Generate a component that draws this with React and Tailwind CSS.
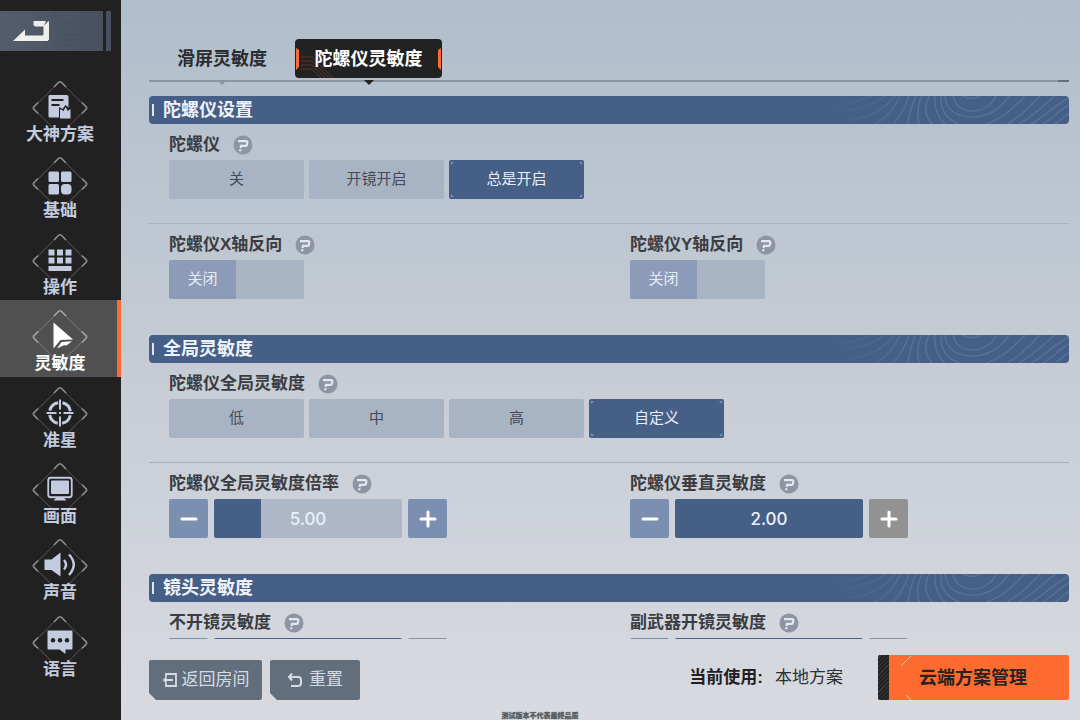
import { useState } from "react";

function SchemeIcon() {
  return (
    <>
      <path
        fillRule="evenodd"
        d="M3 1.500 H20 Q22 1.500 22 3.500 V14 L19 11.500 L16 15.500 L12.500 13.500 V24 H3 Q2 24 2 22.500 V3 Q2 1.500 3 1.500 Z M5 5.500 V7.500 H17 V5.500 Z M5 10.500 V12.500 H13 V10.500 Z"
      />
      <path d="M13.500 25 V15.500 L17 17.500 L19.200 13.500 L21.200 17.500 L24 15.500 V25 Z" />
    </>
  );
}

function BasicIcon() {
  return (
    <>
      <rect x="2" y="2" width="10.500" height="10.500" rx="1.500" />
      <rect x="14.500" y="2" width="10.500" height="10.500" rx="1.500" />
      <rect x="2" y="14.500" width="10.500" height="10.500" rx="1.500" />
      <rect x="14.500" y="14.500" width="10.500" height="10.500" rx="4" />
    </>
  );
}

function ControlIcon() {
  return (
    <>
      {[2, 10.5, 19].map((x) => (
        <g key={x}>
          <rect x={x} y="3" width="6" height="6" />
          <rect x={x} y="11" width="6" height="6" />
        </g>
      ))}
      <rect x="2" y="19.500" width="23" height="5" />
    </>
  );
}

function CursorIcon() {
  return (
    <>
      <path d="M7 0 L26.500 17 L14 17.500 L7 26 Z" />
      <path d="M10.500 26 L15 19.500 L25.500 18.800 L20 23 L17.500 22.800 Z" />
    </>
  );
}

function AimIcon() {
  return (
    <>
      <circle
        cx="13.500"
        cy="13.500"
        r="10.500"
        fill="none"
        stroke="currentColor"
        strokeWidth="3"
        strokeDasharray="12 4.490"
        strokeDashoffset="-2.250"
      />
      <path d="M12.500 0 H14.500 V10 H12.500 Z M12.500 17 H14.500 V27 H12.500 Z M0 12.500 H10 V14.500 H0 Z M17 12.500 H27 V14.500 H17 Z M12.500 12.500 H14.500 V14.500 H12.500 Z" />
    </>
  );
}

function DisplayIcon() {
  return (
    <>
      <rect x="1.750" y="2.250" width="23.500" height="19.500" rx="2.500" fill="none" stroke="currentColor" strokeWidth="1.800" />
      <rect x="4.500" y="5" width="18" height="13.500" rx="1" />
      <path d="M10.500 21.500 H16.500 L20 25 H7 Z" />
    </>
  );
}

function SoundIcon() {
  return (
    <>
      <path d="M-2 8 H5 L14 1 V25 L5 18.500 H-2 Z" />
      <path
        d="M17.500 8.500 Q21.500 13 17.500 18 M22.500 3 Q32 13 22.500 23.500"
        fill="none"
        stroke="currentColor"
        strokeWidth="2.400"
      />
    </>
  );
}

function LanguageIcon() {
  return (
    <path
      fillRule="evenodd"
      d="M2 2 H25 Q26 2 26 3 V20 Q26 21 25 21 H19 V25.500 L13 21 H2 Q1 21 1 20 V3 Q1 2 2 2 Z M6.500 9.500 a2.300 2.300 0 1 0 0.010 0 Z M13.500 9.500 a2.300 2.300 0 1 0 0.010 0 Z M20.500 9.500 a2.300 2.300 0 1 0 0.010 0 Z"
    />
  );
}

const NAV = [
  { id: "scheme", label: "大神方案", Icon: SchemeIcon },
  { id: "basic", label: "基础", Icon: BasicIcon },
  { id: "control", label: "操作", Icon: ControlIcon },
  { id: "sensitivity", label: "灵敏度", Icon: CursorIcon },
  { id: "aim", label: "准星", Icon: AimIcon },
  { id: "display", label: "画面", Icon: DisplayIcon },
  { id: "sound", label: "声音", Icon: SoundIcon },
  { id: "language", label: "语言", Icon: LanguageIcon },
];

function NavItem({ item, active, onSelect }) {
  const { Icon, label } = item;
  return (
    <button
      type="button"
      onClick={onSelect}
      aria-current={active ? "page" : undefined}
      className={
        "grid min-h-0 flex-1 grid-cols-1 justify-items-center border-r-4 pt-2 pl-[3px] " +
        (active ? "border-[#fc6b33] bg-[#505050] text-white" : "border-transparent text-[#c3cbdf]")
      }
    >
      <svg viewBox="0 0 58 58" className="col-start-1 row-start-1 size-[58px]" aria-hidden="true">
        <rect x="10" y="10" width="38" height="38" rx="3" transform="rotate(45 29 29)" fill="none" stroke="#fff" strokeOpacity="0.2" />
        <path
          d="M23 8 L27.500 3.200 Q29 2 30.500 3.200 L35 8 M7 23.500 L2.500 28 Q1.700 29 2.500 30 L7 34.500 M51 23.500 L55.500 28 Q56.300 29 55.500 30 L51 34.500"
          fill="none"
          stroke="#fff"
          strokeOpacity="0.45"
          strokeWidth="1.400"
        />
        <g transform="translate(15.500 14.500)" fill="currentColor">
          <Icon />
        </g>
      </svg>
      <span className="z-10 col-start-1 row-start-1 mt-[46px] text-[17px] leading-5 font-bold">{label}</span>
    </button>
  );
}

function HelpIcon({ topic }) {
  return (
    <button type="button" aria-label={topic + "说明"} className="size-5">
      <svg viewBox="0 0 20 20" className="size-5" aria-hidden="true">
        <circle cx="10" cy="10" r="9.500" fill="#8e95a2" />
        <path d="M5 6.200 H13 Q14.500 6.200 14.300 7.500 L14 9.500 Q13.800 10.800 12.500 10.800 H8 L7.600 13" fill="none" stroke="#e3e7f0" strokeWidth="2.200" />
        <path d="M6.300 14.300 H8.600 L8.300 16.300 H6 Z" fill="#e3e7f0" />
      </svg>
    </button>
  );
}

function Contours() {
  return (
    <svg viewBox="0 0 240 28" className="h-7 w-60" aria-hidden="true">
      <defs>
        <linearGradient id="contour-fade" gradientUnits="userSpaceOnUse" x1="0" y1="0" x2="240" y2="0">
          <stop offset="0" stopColor="#7f9ac0" stopOpacity="0" />
          <stop offset="0.350" stopColor="#7f9ac0" stopOpacity="0.280" />
          <stop offset="1" stopColor="#7f9ac0" stopOpacity="0.280" />
        </linearGradient>
      </defs>
      <path
        fill="none"
        stroke="url(#contour-fade)"
        strokeWidth="1.500"
        d="M134 0 Q143 5 151 0 M124 0 C126 10 134 15 143 15 C155 15 164 8 167 0 M116 0 C117 14 128 21 143 21 C160 21 172 12 180 0 M112 0 C111 14 118 23 130 28 M158 28 C175 22 186 10 196 0 M106 0 C105 12 108 21 116 28 M100 0 C95 10 96 20 103 28 M93 0 C88 10 88 20 90 28 M87 0 C82 10 80 20 79 28 M80 0 C76 12 70 22 64 28 M71 0 C66 12 58 22 46 28 M66 0 C54 14 42 21 20 24 M56 0 C44 9 30 14 8 16 M42 0 C32 5 20 8 4 9 M178 28 C190 22 200 12 211 0 M190 28 C204 20 214 10 226 0 M202 28 C214 22 222 12 240 2 M214 28 C222 24 230 14 240 9 M226 28 L240 17"
      />
    </svg>
  );
}

function SectionHeader({ children }) {
  return (
    <div className="flex h-7 items-center overflow-hidden rounded-sm bg-[#465f87] pl-[3px] text-[#eef2fa]">
      <span className="h-3 w-0.5 bg-[#dfe6f2]" />
      <h2 className="ml-[9px] flex-1 text-lg leading-7 font-bold">{children}</h2>
      <Contours />
    </div>
  );
}

function Field({ label, children }) {
  return (
    <div className="px-5 pt-2.5">
      <div className="mb-1 flex h-[22px] items-center gap-[13px]">
        <span className="text-[17px] leading-[22px] font-bold text-[#3b3d42]">{label}</span>
        <HelpIcon topic={label} />
      </div>
      {children}
    </div>
  );
}

function Corners() {
  return (
    <svg viewBox="0 0 135 39" className="pointer-events-none absolute inset-0 size-full" fill="#7f94b6" aria-hidden="true">
      <path d="M2 2 h3 l-3 3 z M133 2 h-3 l3 3 z M2 37 h3 l-3 -3 z M133 37 h-3 l3 -3 z" />
    </svg>
  );
}

function Segmented({ label, name, options, value, onChange }) {
  return (
    <div role="radiogroup" aria-label={label} className="flex gap-[5px]">
      {options.map((option) => {
        const on = option === value;
        return (
          <label
            key={option}
            className={
              "relative flex h-[39px] w-[135px] cursor-pointer items-center justify-center rounded-xs text-[15px] " +
              (on ? "bg-[#465f87] text-[#e8eefa]" : "bg-[#a8b4c3] text-[#434b58]")
            }
          >
            <input type="radio" name={name} checked={on} onChange={() => onChange(option)} className="sr-only" />
            {option}
            {on && <Corners />}
          </label>
        );
      })}
    </div>
  );
}

function Toggle({ label }) {
  const [on, setOn] = useState(false);
  return (
    <label
      className={
        "relative flex h-[39px] w-[135px] cursor-pointer overflow-hidden rounded-xs bg-[#a8b4c3] " +
        (on ? "justify-end" : "justify-start")
      }
    >
      <input
        type="checkbox"
        role="switch"
        aria-label={label}
        checked={on}
        onChange={(e) => setOn(e.target.checked)}
        className="sr-only"
      />
      <span className="flex w-[67px] items-center justify-center bg-[#8c9cb8] text-[15px] text-[#e4eaf5]">
        {on ? "开启" : "关闭"}
      </span>
    </label>
  );
}

function StepButton({ kind, disabled, onClick }) {
  return (
    <button
      type="button"
      aria-label={kind === "plus" ? "增加" : "减少"}
      disabled={disabled}
      onClick={onClick}
      className={"grid size-[39px] place-items-center rounded-xs " + (disabled ? "bg-[#929292]" : "bg-[#7b8fb0]")}
    >
      <svg viewBox="0 0 18 18" className="size-[18px]" fill="none" stroke="#fff" strokeWidth="3" strokeLinecap="round" aria-hidden="true">
        <path d={kind === "plus" ? "M2 9 H16 M9 2 V16" : "M2 9 H16"} />
      </svg>
    </button>
  );
}

function Stepper({ label, max, initial }) {
  const [value, setValue] = useState(initial);
  const percent = (value / max) * 100;
  const step = (delta) => setValue((v) => Math.min(max, Math.max(0, v + delta)));
  return (
    <div className="flex gap-1.5">
      <StepButton kind="minus" disabled={value <= 0} onClick={() => step(-0.1)} />
      <div className="grid h-[39px] w-[188px] grid-cols-1 overflow-hidden rounded-xs">
        <input
          type="range"
          aria-label={label}
          min="0"
          max={max}
          step="0.01"
          value={value}
          onChange={(e) => setValue(Number(e.target.value))}
          style={{ background: `linear-gradient(to right, #465f87 ${percent}%, #adb7c5 ${percent}%)` }}
          className="col-start-1 row-start-1 m-0 h-[39px] w-full cursor-pointer appearance-none [&::-webkit-slider-thumb]:size-px [&::-webkit-slider-thumb]:appearance-none"
        />
        <output className="pointer-events-none z-10 col-start-1 row-start-1 place-self-center pt-0.5 font-['Inter'] text-[17px] font-medium text-[#eaf0fa]">
          {value.toFixed(2)}
        </output>
      </div>
      <StepButton kind="plus" disabled={value >= max} onClick={() => step(0.1)} />
    </div>
  );
}

function Columns({ children }) {
  return <div className="grid grid-cols-2 gap-x-0.5">{children}</div>;
}

function Divider() {
  return <hr className="mt-6 border-t border-[#a9b1bd]" />;
}

function Tab({ active, children, onClick }) {
  return (
    <button
      type="button"
      role="tab"
      aria-selected={active}
      onClick={onClick}
      className={
        "relative h-[39px] rounded-sm text-lg leading-[41px] font-bold " +
        (active ? "w-[147px] bg-[#222] text-white" : "w-[146px] text-[#2b2d31]")
      }
    >
      {active && (
        <svg viewBox="0 0 147 39" className="absolute inset-0 size-full" fill="none" aria-hidden="true">
          <path d="M1 9 L4 11 V28 L1 31 Z M146 9 L143 11 V28 L146 31 Z" fill="#fc6b33" />
          <path
            d="M6 18 H17 L38 39 M6 22 H17 L34 39 M6 26 H17 L30 39 M6 30 H17 L26 39"
            stroke="#fc6b33"
            strokeOpacity="0.35"
            strokeWidth="0.800"
          />
        </svg>
      )}
      <span className="relative">{children}</span>
      <svg viewBox="0 0 10 6" className="absolute top-full left-1/2 mt-0.5 h-1.5 w-2.5 -translate-x-1/2" aria-hidden="true">
        <path d="M0 0 H10 L5 5 Z" fill={active ? "#222" : "#8a95a1"} />
      </svg>
    </button>
  );
}

export default function App() {
  const [page, setPage] = useState("sensitivity");
  const [tab, setTab] = useState("gyro");
  const [gyro, setGyro] = useState("总是开启");
  const [preset, setPreset] = useState("自定义");

  return (
    <div className="relative flex h-screen overflow-hidden bg-linear-to-b from-[#b0becb] from-0% via-[#c8cdd6] via-55% to-[#d8dae0] to-100% font-['Liberation_Sans','Noto_Sans_CJK_SC',sans-serif]">
      <aside className="flex w-[121px] shrink-0 flex-col bg-[#212121] pt-[11px] pb-[38px]">
        <button type="button" aria-label="返回" className="flex h-10 gap-[3px]">
          <span className="h-10 w-[103px] bg-linear-to-r from-[#545d6d] to-[#49515f]">
            <svg viewBox="0 0 103 40" className="h-10 w-[103px]" aria-hidden="true">
              <g fill="none" stroke="#3d4a66" strokeOpacity="0.5" strokeWidth="0.800">
                <path d="M58 0 Q62 14 74 12 Q84 8 82 0 M54 0 Q58 22 76 18 Q90 12 88 0 M52 6 Q60 28 78 24 Q96 16 94 0 M56 22 Q66 34 82 28 Q100 20 100 0 M56 30 Q72 40 88 32 Q98 28 103 20 M74 40 Q92 38 103 28" />
              </g>
              <path d="M13 30 L25 18.500 V24.500 H42.500 L43.500 23.500 V15.500 L35 15.500 L33.500 14 V10 H46 L44 14.500 L48.500 10 Q49 10 49 11 V28.500 L47.500 30 Z" fill="#efeeea" />
            </svg>
          </span>
          <span className="h-10 w-[5px] bg-[#4a515e]" />
        </button>
        <nav className="mt-5 flex min-h-0 flex-1 flex-col">
          {NAV.map((item) => (
            <NavItem key={item.id} item={item} active={page === item.id} onSelect={() => setPage(item.id)} />
          ))}
        </nav>
      </aside>

      <main className="flex min-w-0 flex-1 flex-col pt-[39px] pr-[11px] pb-5 pl-7">
        <div role="tablist" className="flex">
          <Tab active={tab === "swipe"} onClick={() => setTab("swipe")}>
            滑屏灵敏度
          </Tab>
          <Tab active={tab === "gyro"} onClick={() => setTab("gyro")}>
            陀螺仪灵敏度
          </Tab>
        </div>
        <div className="mt-0.5 flex h-0.5 justify-end bg-[#8b96a2]">
          <span className="h-0.5 w-[11px] bg-[#65707c]" />
        </div>

        <div className="mt-3.5 flex min-h-0 flex-1 flex-col gap-9 overflow-y-auto [scrollbar-width:none]">
          <section>
            <SectionHeader>陀螺仪设置</SectionHeader>
            <Field label="陀螺仪">
              <Segmented label="陀螺仪" name="gyro" options={["关", "开镜开启", "总是开启"]} value={gyro} onChange={setGyro} />
            </Field>
            <Divider />
            <Columns>
              <Field label="陀螺仪X轴反向">
                <Toggle label="陀螺仪X轴反向" />
              </Field>
              <Field label="陀螺仪Y轴反向">
                <Toggle label="陀螺仪Y轴反向" />
              </Field>
            </Columns>
          </section>

          <section>
            <SectionHeader>全局灵敏度</SectionHeader>
            <Field label="陀螺仪全局灵敏度">
              <Segmented label="陀螺仪全局灵敏度" name="preset" options={["低", "中", "高", "自定义"]} value={preset} onChange={setPreset} />
            </Field>
            <Divider />
            <Columns>
              <Field label="陀螺仪全局灵敏度倍率">
                <Stepper label="陀螺仪全局灵敏度倍率" max={20} initial={5} />
              </Field>
              <Field label="陀螺仪垂直灵敏度">
                <Stepper label="陀螺仪垂直灵敏度" max={2} initial={2} />
              </Field>
            </Columns>
          </section>

          <section>
            <SectionHeader>镜头灵敏度</SectionHeader>
            <Columns>
              <Field label="不开镜灵敏度">
                <Stepper label="不开镜灵敏度" max={3} initial={3} />
              </Field>
              <Field label="副武器开镜灵敏度">
                <Stepper label="副武器开镜灵敏度" max={3} initial={3} />
              </Field>
            </Columns>
          </section>
        </div>

        <footer className="mt-4 flex h-[45px] items-center">
          <div className="flex gap-2 self-end text-[17px] text-[#d5dbe5]">
            <button
              type="button"
              className="flex h-10 w-[113px] items-center justify-center gap-1 rounded-xs bg-[#636e7d] [clip-path:polygon(0_0,100%_0,100%_100%,7px_100%,0_calc(100%-7px))]"
            >
              <svg viewBox="0 0 16 16" className="size-4" fill="none" stroke="currentColor" strokeWidth="1.800" aria-hidden="true">
                <path d="M4 5 V2 H14 V14 H4 V11 M11 8 H2 M4.500 5.500 L2 8 L4.500 10.500" />
              </svg>
              返回房间
            </button>
            <button
              type="button"
              className="flex h-10 w-[90px] items-center justify-center gap-1.5 rounded-xs bg-[#636e7d] [clip-path:polygon(0_0,100%_0,100%_100%,7px_100%,0_calc(100%-7px))]"
            >
              <svg viewBox="0 0 16 16" className="size-4" fill="none" stroke="currentColor" strokeWidth="2" aria-hidden="true">
                <path d="M5 1.500 L2 5 L5 8.500 M2.500 5 H11 Q14 5 14 8 V11 Q14 14 11 14 H4" />
              </svg>
              重置
            </button>
          </div>
          <p className="mr-[35px] ml-auto flex gap-3 text-[17px] leading-6 text-[#2d2f34]">
            <span className="font-bold text-[#1f2023]">当前使用:</span>
            <span>本地方案</span>
          </p>
          <button
            type="button"
            className="relative flex h-[45px] w-[191px] overflow-hidden rounded-xs bg-[#fe6b2f] text-lg font-bold text-[#2a221f]"
          >
            <span className="h-full w-[11px] bg-[repeating-linear-gradient(135deg,#222_0px,#222_2px,#383838_2px,#383838_3px)]" />
            <svg viewBox="0 0 12 45" className="ml-3 h-[45px] w-3" fill="none" stroke="#ffc9a8" aria-hidden="true">
              <path d="M0.500 10.500 L10 1 M5 40 L10 45" />
            </svg>
            <span className="flex-1 self-center pr-9 text-center">云端方案管理</span>
          </button>
        </footer>
      </main>

      <p className="pointer-events-none absolute inset-x-0 bottom-0 text-center text-[7px] leading-[8px] font-bold text-[#5a5d63] [text-shadow:0_0_1px_#444]">
        测试版本不代表最终品质
      </p>
    </div>
  );
}
